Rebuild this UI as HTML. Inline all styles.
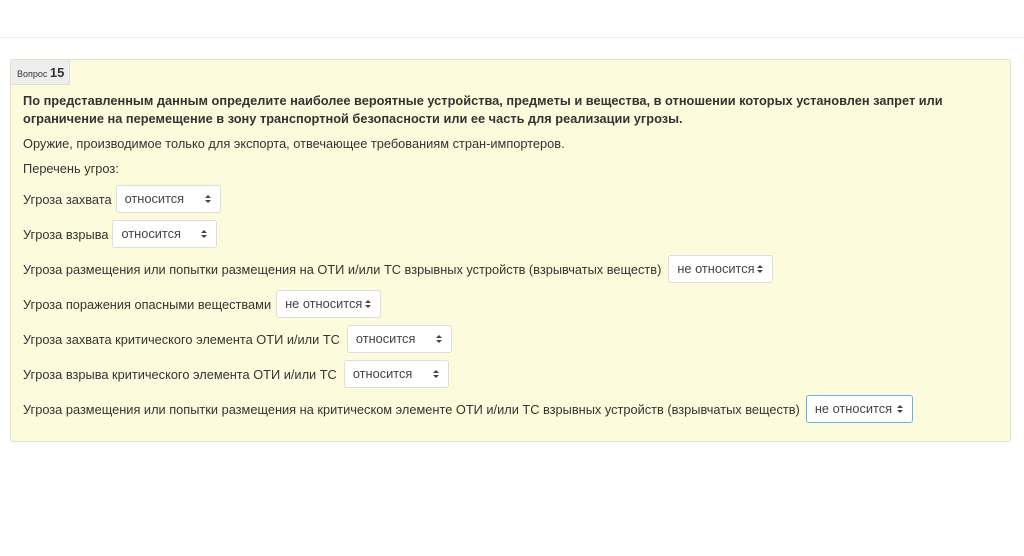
<!DOCTYPE html>
<html><head><meta charset="utf-8"><style>
body{margin:0;width:1024px;height:556px;background:#fff;font-family:"Liberation Sans",Arial,sans-serif;color:#333;position:relative;overflow:hidden}
.top{position:absolute;left:0;right:0;top:37px;border-top:1px solid #ececec}
.panel{position:absolute;left:10px;top:59px;width:999px;height:381px;background:#fcfcdc;border:1px solid #e3e3c8;border-radius:3px}
.tab{position:absolute;left:0;top:0;width:59px;height:25px;background:#eee;border-right:1px solid #ddd;border-bottom:1px solid #ddd;font-size:9px;line-height:25px;padding-left:6px;box-sizing:border-box}
.tab b{font-size:13px}
.t{position:absolute;left:12px;font-size:12.8px;white-space:nowrap}
.bold{font-weight:bold;line-height:18px}
.row{position:absolute;left:12px;font-size:12.8px;white-space:nowrap;display:flex;align-items:center;height:28px}
.sel{display:inline-block;margin-left:4px;width:105px;height:28px;box-sizing:border-box;background:#fff;border:1px solid #ddd;border-radius:3px;font-size:12.8px;line-height:26px;padding-left:8px;position:relative;color:#444}
.sel:after{content:"";position:absolute;right:9px;top:9px;width:0;height:0;border:3px solid transparent;border-bottom:3.5px solid #444;border-top:none}
.sel:before{content:"";position:absolute;right:9px;top:14px;width:0;height:0;border:3px solid transparent;border-top:3.5px solid #444;border-bottom:none}
.blue{border-color:#66afe9}
</style></head><body>
<div class="top"></div>
<div class="panel">
<div class="tab">Вопрос <b>15</b></div>
<div class="t bold" style="top:32px">По представленным данным определите наиболее вероятные устройства, предметы и вещества, в отношении которых установлен запрет или<br>ограничение на перемещение в зону транспортной безопасности или ее часть для реализации угрозы.</div>
<div class="t" style="top:76px">Оружие, производимое только для экспорта, отвечающее требованиям стран-импортеров.</div>
<div class="t" style="top:101px">Перечень угроз:</div>
<div class="row" style="top:125px">Угроза захвата<span class="sel">относится</span></div>
<div class="row" style="top:160px">Угроза взрыва<span class="sel">относится</span></div>
<div class="row" style="top:195px">Угроза размещения или попытки размещения на ОТИ и/или ТС взрывных устройств (взрывчатых веществ)<span class="sel" style="margin-left:7px">не относится</span></div>
<div class="row" style="top:230px">Угроза поражения опасными веществами<span class="sel" style="margin-left:5px">не относится</span></div>
<div class="row" style="top:265px">Угроза захвата критического элемента ОТИ и/или ТС<span class="sel" style="margin-left:7px">относится</span></div>
<div class="row" style="top:300px">Угроза взрыва критического элемента ОТИ и/или ТС<span class="sel" style="margin-left:7px">относится</span></div>
<div class="row" style="top:335px">Угроза размещения или попытки размещения на критическом элементе ОТИ и/или ТС взрывных устройств (взрывчатых веществ)<span class="sel blue" style="margin-left:6px;width:107px">не относится</span></div>
</div>
</body></html>
